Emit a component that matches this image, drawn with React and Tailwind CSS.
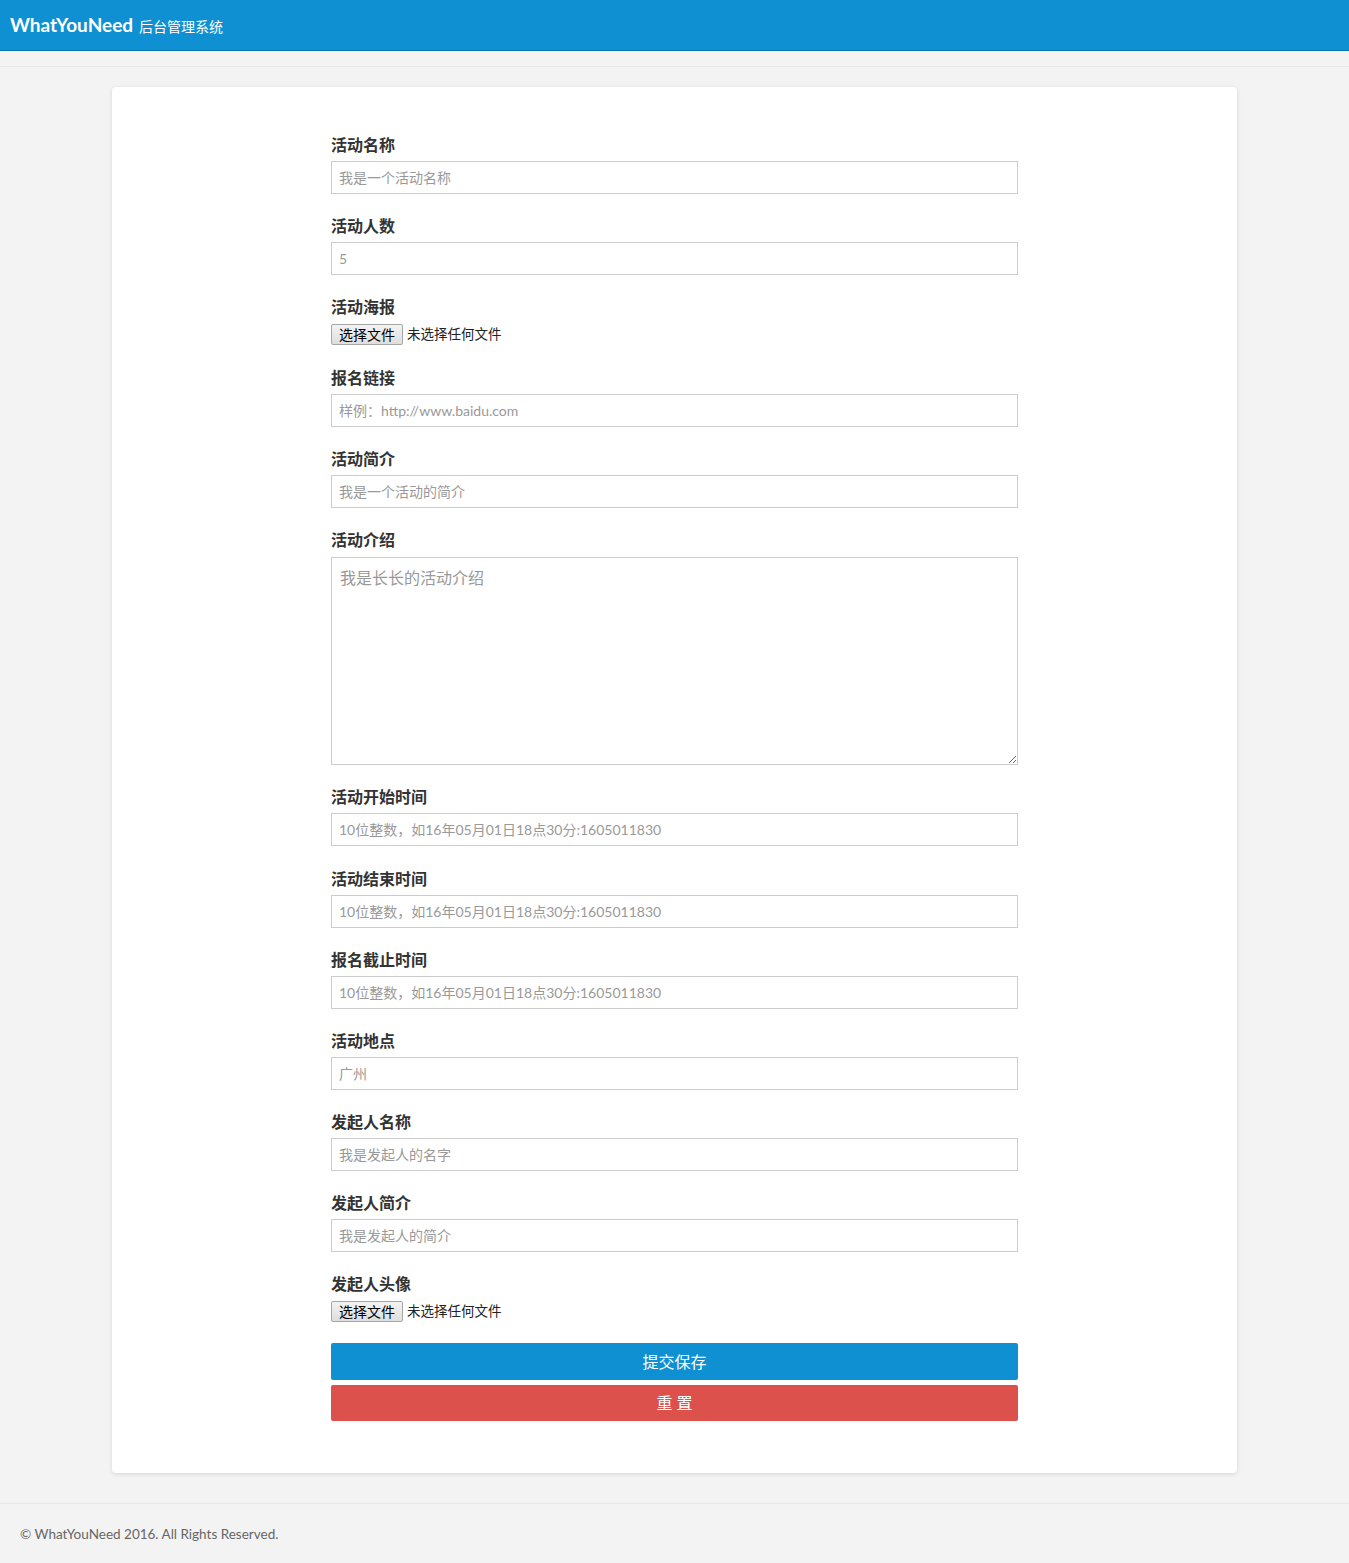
import React from "react";

const font = { fontFamily: 'Lato, "Noto Sans CJK SC", sans-serif' };

function Label({ children, mb = "mb-[5px]" }) {
  return (
    <div className={"text-[16px] font-bold leading-[22px] text-[#333] " + mb}>{children}</div>
  );
}

function Field({ label, placeholder, mb }) {
  return (
    <div className={mb || "mb-[21px]"}>
      <Label>{label}</Label>
      <input
        className="block w-full h-[33px] border border-[#ccc] bg-white px-[7px] text-[14px] text-[#555] outline-none placeholder:text-[#999]"
        placeholder={placeholder}
        style={font}
      />
    </div>
  );
}

function FileField({ label, last }) {
  return (
    <div className={last ? "mb-[21px]" : "mb-[22px]"}>
      <div className="text-[16px] font-bold leading-[22px] text-[#333] mb-[6px]">{label}</div>
      <div className="flex items-center h-[21px]">
        <div className="h-[21px] w-[72px] flex items-center justify-center border border-[#a6a6a6] rounded-[2px] bg-gradient-to-b from-[#f3f3f3] to-[#dedede] text-[14px] text-black leading-none">
          选择文件
        </div>
        <span className="ml-[4px] text-[13.5px] text-[#222]">未选择任何文件</span>
      </div>
    </div>
  );
}

export default function App() {
  const tp = "10位整数，如16年05月01日18点30分:1605011830";
  return (
    <div className="min-h-screen bg-[#f3f3f3] flex flex-col" style={font}>
      <header className="h-[51px] bg-[#0e90d2] border-b border-[#0b76ac] flex items-center pl-[10px]">
        <span className="text-white font-bold text-[19px]">WhatYouNeed</span>
        <span className="text-white text-[14px] ml-[6px] mt-[3px]">后台管理系统</span>
      </header>
      <div className="h-[16px] border-b border-[#e8e8e8]"></div>
      <main className="px-[112px] pt-[20px]">
        <div className="bg-white rounded-[4px] shadow-[0_1px_4px_rgba(0,0,0,0.12)] pt-[47px] pb-[52px]">
          <div className="w-[687px] mx-auto">
            <Field label="活动名称" placeholder="我是一个活动名称" />
            <Field label="活动人数" placeholder="5" />
            <FileField label="活动海报" />
            <Field label="报名链接" placeholder="样例：http://www.baidu.com" />
            <Field label="活动简介" placeholder="我是一个活动的简介" />
            <div className="mb-[21px]">
              <Label mb="mb-[6px]">活动介绍</Label>
              <textarea
                className="block w-full h-[208px] border border-[#ccc] bg-white px-[8px] py-[8px] text-[16px] text-[#555] outline-none placeholder:text-[#999]"
                placeholder="我是长长的活动介绍"
                style={font}
              />
            </div>
            <Field label="活动开始时间" placeholder={tp} mb="mb-[22px]" />
            <Field label="活动结束时间" placeholder={tp} />
            <Field label="报名截止时间" placeholder={tp} />
            <Field label="活动地点" placeholder="广州" />
            <Field label="发起人名称" placeholder="我是发起人的名字" />
            <Field label="发起人简介" placeholder="我是发起人的简介" />
            <FileField label="发起人头像" last />
            <button className="block w-full h-[37px] bg-[#0e90d2] text-white text-[16px] rounded-[2px]">
              提交保存
            </button>
            <button className="block w-full h-[36px] mt-[5px] bg-[#dd514c] text-white text-[16px] rounded-[2px] tracking-[4px] pl-[4px]">
              重置
            </button>
          </div>
        </div>
      </main>
      <footer className="mt-[30px] border-t border-[#e8e8e8] h-[60px] flex items-center pl-[20px] pt-[2px] text-[13.5px] text-[#666]">
        © WhatYouNeed 2016. All Rights Reserved.
      </footer>
    </div>
  );
}
